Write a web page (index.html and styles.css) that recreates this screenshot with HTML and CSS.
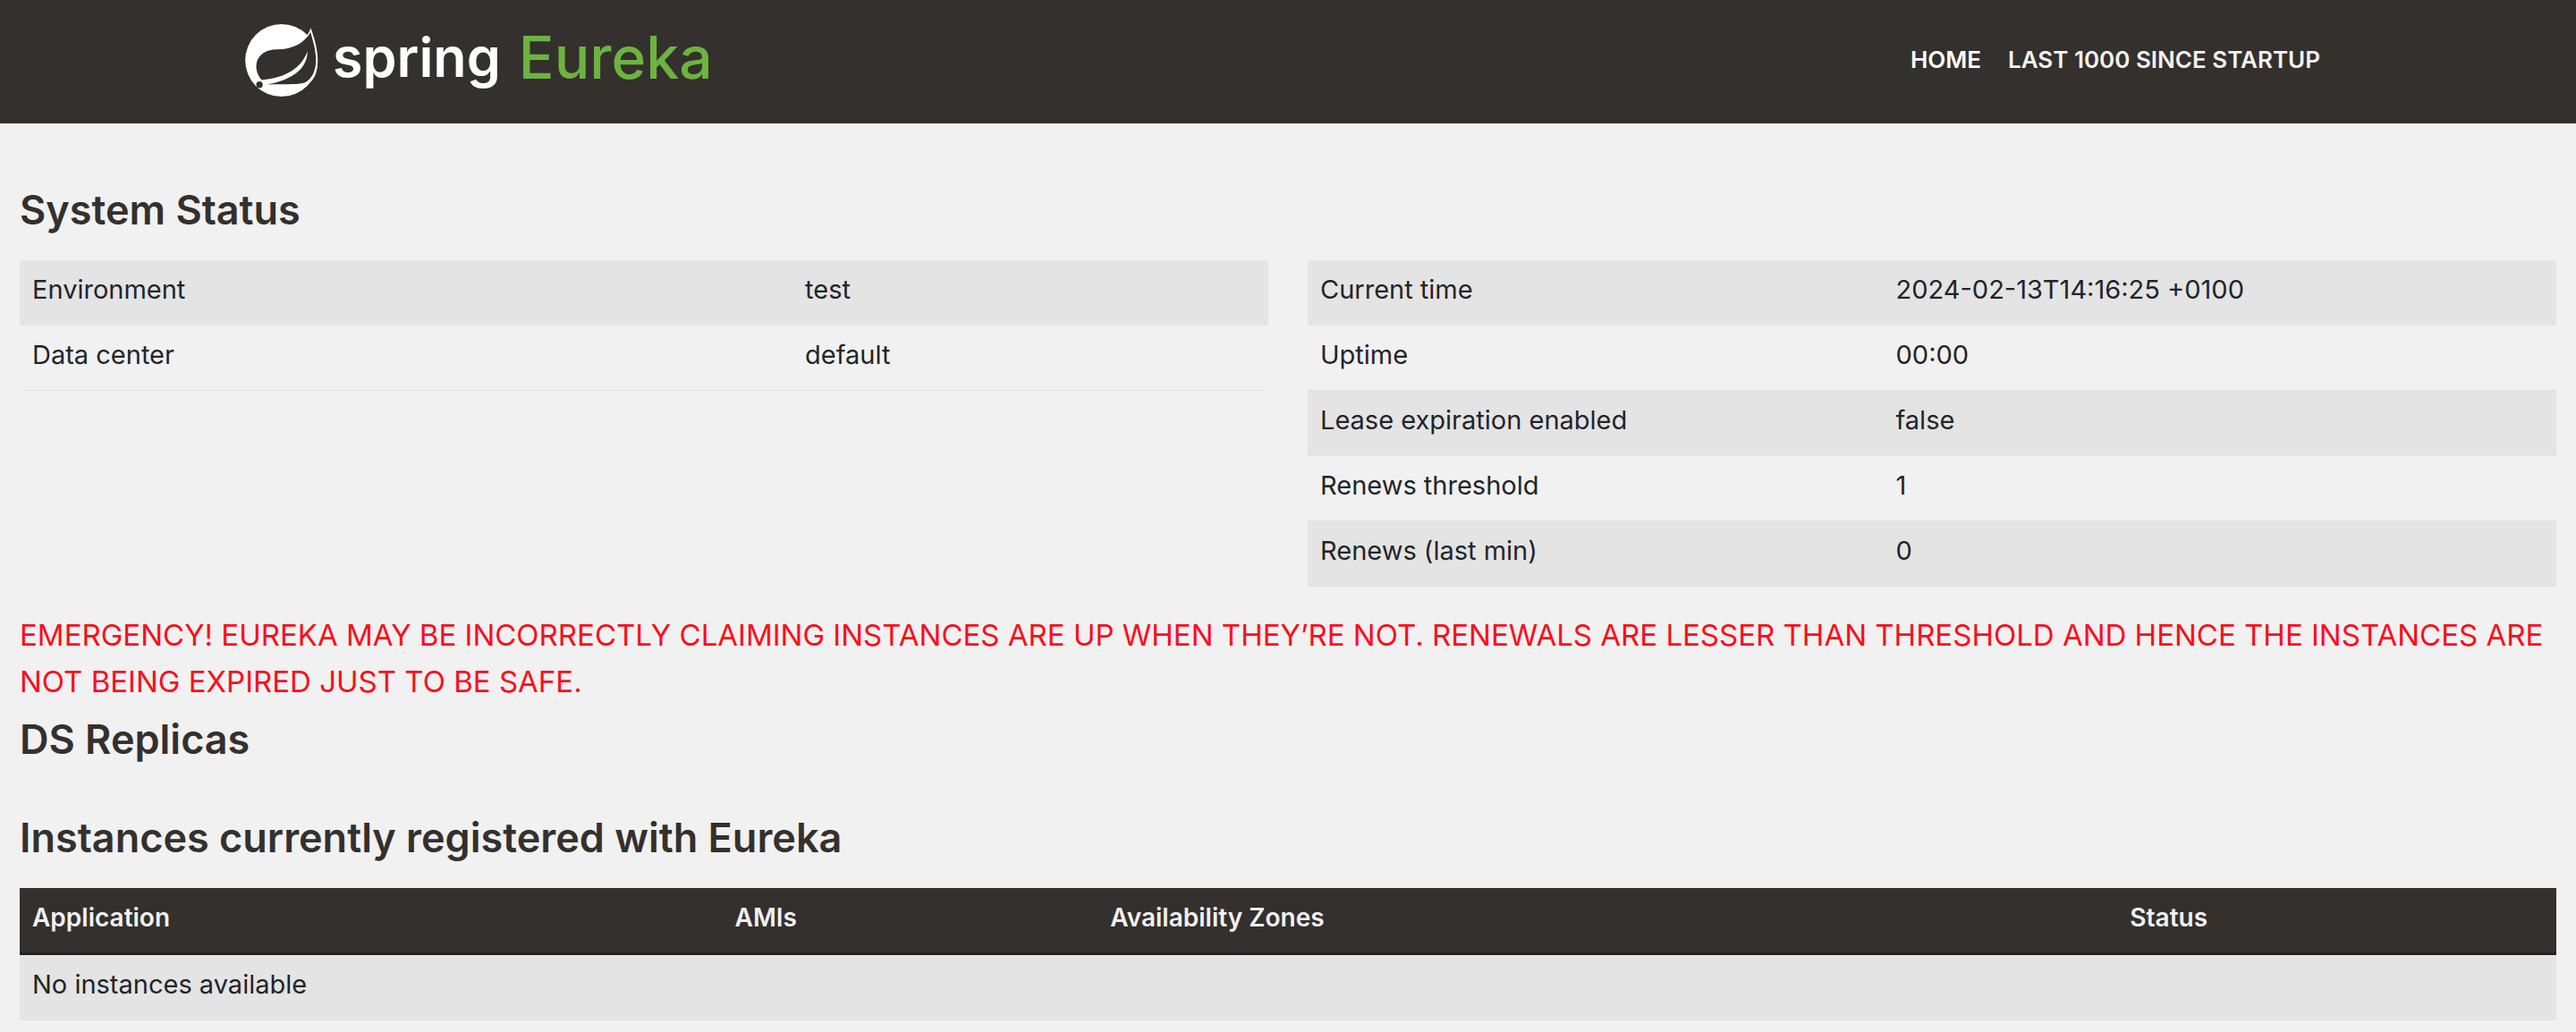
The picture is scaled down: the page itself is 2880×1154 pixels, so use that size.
FILE: index.html
```html
<!DOCTYPE html>
<html lang="en">
<head>
<meta charset="utf-8">
<meta name="viewport" content="width=device-width, initial-scale=1">
<title>Eureka</title>
<link rel="stylesheet" href="styles.css">
</head>
<body>
<header class="navbar">
  <div class="navbar-inner">
    <a class="brand" href="#">
      <svg class="brand-leaf" viewBox="36 33 246 244" aria-hidden="true">
        <circle cx="158" cy="155" r="122" fill="#fff"/>
        <path d="M257 46C266 75 282 115 280 165C278 205 262 232 235 240C220 244 150 238 92 238C76 215 66 185 70 162C76 130 105 114 140 114C195 116 242 90 257 46Z" fill="#fff"/>
        <path d="M256 60C264 90 276 125 274 163C271 198 256 224 230 232C205 238 160 234 110 236C165 226 244 200 246 124C225 180 178 212 92 221C77 206 71 185 74 165C80 134 108 118 142 118C192 119 236 97 256 60Z" fill="#34302d"/>
        <circle cx="84" cy="237" r="11" fill="#34302d"/>
      </svg>
      <span class="brand-spring">spring</span>
      <span class="brand-eureka">Eureka</span>
    </a>
    <nav class="nav">
      <a class="nav-link active" href="#">HOME</a>
      <a class="nav-link" href="#">LAST 1000 SINCE STARTUP</a>
    </nav>
  </div>
</header>
<main class="content">
  <h1 class="heading">System Status</h1>
  <div class="status">
    <table class="table">
      <colgroup><col class="col-name-wide"><col></colgroup>
      <tbody>
        <tr><td>Environment</td><td>test</td></tr>
        <tr><td>Data center</td><td>default</td></tr>
      </tbody>
    </table>
    <table class="table">
      <colgroup><col class="col-name"><col></colgroup>
      <tbody>
        <tr><td>Current time</td><td>2024-02-13T14:16:25 +0100</td></tr>
        <tr><td>Uptime</td><td>00:00</td></tr>
        <tr><td>Lease expiration enabled</td><td>false</td></tr>
        <tr><td>Renews threshold</td><td>1</td></tr>
        <tr><td>Renews (last min)</td><td>0</td></tr>
      </tbody>
    </table>
  </div>
  <p class="alert">EMERGENCY! EUREKA MAY BE INCORRECTLY CLAIMING INSTANCES ARE UP WHEN THEY’RE NOT. RENEWALS ARE LESSER THAN THRESHOLD AND HENCE THE INSTANCES ARE NOT BEING EXPIRED JUST TO BE SAFE.</p>
  <h1 class="heading replicas">DS Replicas</h1>
  <h1 class="heading instances">Instances currently registered with Eureka</h1>
  <table class="table">
    <colgroup><col class="col-app"><col class="col-ami"><col class="col-zone"><col></colgroup>
    <thead>
      <tr><th>Application</th><th>AMIs</th><th>Availability Zones</th><th>Status</th></tr>
    </thead>
    <tbody>
      <tr><td colspan="4">No instances available</td></tr>
    </tbody>
  </table>
</main>
</body>
</html>
```
FILE: styles.css
```css
* {
  box-sizing: border-box;
}

body {
  margin: 0;
  background: #f1f1f1;
  color: #212529;
  font-family: Inter, "Noto Sans", sans-serif;
  font-size: 29px;
  line-height: 40px;
}

.navbar {
  background: #34302d;
}

.navbar-inner {
  display: flex;
  align-items: flex-start;
  justify-content: space-between;
  max-width: 2340px;
  margin: 0 auto;
  padding: 27px 16px 30px 4px;
}

.brand {
  display: flex;
  align-items: flex-start;
  text-decoration: none;
}

.brand-leaf {
  width: 82px;
  height: 81px;
  margin-right: 16px;
}

.brand-spring,
.brand-eureka {
  line-height: 74px;
}

.brand-spring {
  margin-right: 20px;
  color: #fff;
  font-size: 61px;
  font-weight: 600;
}

.brand-eureka {
  color: #6db33f;
  font-size: 66px;
  font-weight: 500;
}

.nav {
  display: flex;
  gap: 30px;
  padding-top: 20px;
}

.nav-link {
  color: #f1f1f1;
  font-size: 26px;
  font-weight: 600;
  line-height: 40px;
  text-decoration: none;
}

.nav-link.active {
  color: #fff;
}

.content {
  padding: 70px 22px 12px;
}

.heading {
  margin: 0 0 29px;
  color: #34302d;
  font-size: 45px;
  font-weight: 600;
  line-height: 54px;
}

.status {
  display: grid;
  grid-template-columns: 1fr 1fr;
  gap: 44px;
  align-items: start;
}

.table {
  width: 100%;
  table-layout: fixed;
  border-collapse: separate;
  border-spacing: 0;
}

.table th,
.table td {
  padding: 13px 14px 19px;
  text-align: left;
}

.table td {
  border-bottom: 1px solid #dee2e6;
}

.table tbody tr:nth-child(odd) {
  background: #e4e4e4;
}

.table th {
  background: #34302d;
  border-bottom: 3px solid #212529;
  color: #f1f1f1;
  font-size: 28px;
  font-weight: 600;
}

.col-name-wide {
  width: 61.9%;
}

.col-name {
  width: 46.1%;
}

.col-app {
  width: 27.7%;
}

.col-ami {
  width: 14.8%;
}

.col-zone {
  width: 40.2%;
}

.alert {
  margin: 28px 0 12px;
  color: #fc0d1b;
  font-size: 33px;
  line-height: 52px;
}

.replicas {
  margin-bottom: 56px;
}
```
